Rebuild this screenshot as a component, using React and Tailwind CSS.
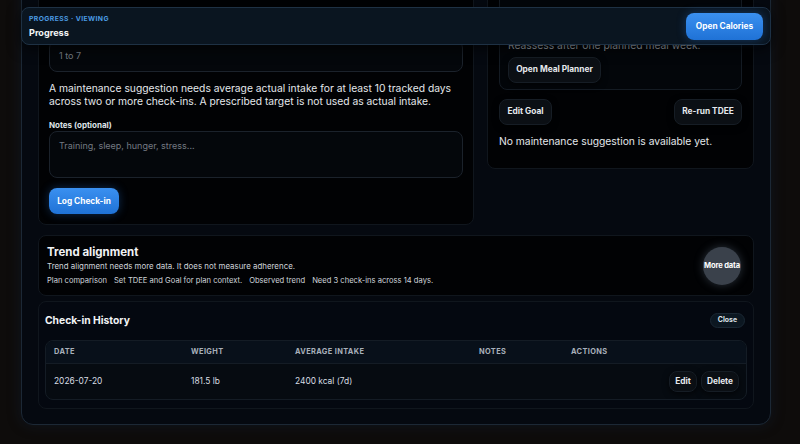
import React from 'react';

const card = 'border border-[#10161d] bg-[#010204] rounded-lg';
const ghostBtn =
  'flex items-center justify-center whitespace-nowrap rounded-lg border border-[#161d25] bg-[#0b0f14] text-[8.3px] font-bold text-[#e6e9ed] shadow-[0_2px_6px_rgba(0,0,0,0.6)]';
const blueBtn =
  'flex items-center justify-center whitespace-nowrap rounded-lg bg-gradient-to-b from-[#3a90f0] to-[#1f72d6] font-bold text-white shadow-[0_0_10px_rgba(40,120,220,0.35)]';

const App = () => {
  return (
    <div className="relative h-[444px] w-[800px] overflow-hidden bg-[#0e0c0b] font-['Inter',sans-serif]">
      {/* Main panel (scrolled, top hidden under the sticky header) */}
      <div className="ml-[21px] mt-[-40px] w-[750px] rounded-xl border border-[#1c2835] bg-[#050910] px-4 pb-[15px] pt-[12px] shadow-[0_0_14px_rgba(20,40,70,0.35)]">
        <div className="grid grid-cols-[436px_1fr] items-start gap-[13px]">
          {/* Left card */}
          <div className={`${card} px-[10px] pb-[10px] pt-[10px]`}>
            <div className="h-[55.5px]"></div>
            <div className="flex h-[32px] items-center rounded-lg border border-[#1b222b] bg-[#04070b] px-[9px] text-[9px] text-[#7a8088]">
              1 to 7
            </div>
            <p className="mt-[10px] text-[10.3px] leading-[13.5px] text-[#e4e7eb]">
              A maintenance suggestion needs average actual intake for at least 10 tracked days across two or more
              check-ins. A prescribed target is not used as actual intake.
            </p>
            <div className="mt-[11px] text-[8px] font-bold leading-[11px] text-[#dfe3e8]">Notes (optional)</div>
            <div className="h-[47px] rounded-lg border border-[#1b222b] bg-[#04070b] px-[9px] pt-[7px] text-[9px] text-[#737982]">
              Training, sleep, hunger, stress...
            </div>
            <button className={`${blueBtn} mt-[10.5px] h-[26px] w-[70px] text-[8.3px]`}>Log Check-in</button>
          </div>

          {/* Right card */}
          <div className={`${card} px-[11px] pb-[20px] pt-[10px]`}>
            <div className="rounded-lg border border-[#141b23] bg-[#03060a] px-[8px] pb-[6px] pt-[8px]">
              <div className="h-[46px]"></div>
              <div className="text-[10.3px] leading-[13px] text-[#9aa0a8]">Reassess after one planned meal week.</div>
              <button className={`${ghostBtn} mt-[4.5px] h-[26px] w-[93px]`}>Open Meal Planner</button>
            </div>
            <div className="mt-[9px] flex justify-between">
              <button className={`${ghostBtn} h-[26px] w-[53px]`}>Edit Goal</button>
              <button className={`${ghostBtn} h-[26px] w-[68px]`}>Re-run TDEE</button>
            </div>
            <p className="mt-[10px] text-[10.3px] leading-[13.5px] text-[#e4e7eb]">
              No maintenance suggestion is available yet.
            </p>
          </div>
        </div>

        {/* Trend alignment */}
        <div className={`${card} mt-[10px] flex h-[61px] items-center justify-between pl-[8px] pr-[12px]`}>
          <div>
            <div className="text-[11.5px] font-bold leading-[14px] text-[#f1f3f5]">Trend alignment</div>
            <div className="mt-[1px] text-[7.9px] leading-[12px] text-[#cfd4da]">
              Trend alignment needs more data. It does not measure adherence.
            </div>
            <div className="mt-[3px] flex gap-[7px] text-[7.6px] leading-[12px] text-[#cfd4da]">
              <span>Plan comparison</span>
              <span>Set TDEE and Goal for plan context.</span>
              <span>Observed trend</span>
              <span>Need 3 check-ins across 14 days.</span>
            </div>
          </div>
          <div className="flex h-[38px] w-[38px] items-center justify-center whitespace-nowrap rounded-full bg-[#3a414b] text-[7.6px] font-bold tracking-[-0.02em] text-white shadow-[0_0_10px_rgba(120,140,160,0.35)]">
            More data
          </div>
        </div>

        {/* Check-in History */}
        <div className="mt-[5px] rounded-lg border border-[#10161d] bg-[#040810] px-[6px] pb-[8px] pt-[10px]">
          <div className="flex items-center justify-between pr-[2px]">
            <div className="text-[10.3px] font-bold leading-[16px] text-[#f1f3f5]">Check-in History</div>
            <button className="flex h-[15px] items-center rounded-full border border-[#1a2733] bg-[#0c1721] px-[7px] text-[6.9px] font-bold text-[#dfe4ea]">
              Close
            </button>
          </div>
          <div className="mt-[12px] overflow-hidden rounded-lg border border-[#141c25] bg-[#060b11]">
            <div className="grid h-[23px] grid-cols-[137px_104px_184px_92px_1fr] items-center border-b border-[#141c25] bg-[#08101a] px-[8px] text-[7.4px] font-bold tracking-[0.05em] text-[#a8b0ba]">
              <span>DATE</span>
              <span>WEIGHT</span>
              <span>AVERAGE INTAKE</span>
              <span>NOTES</span>
              <span>ACTIONS</span>
            </div>
            <div className="grid h-[35px] grid-cols-[137px_104px_184px_92px_1fr] items-center pl-[8px] pr-[7px] text-[8.4px] text-[#d8dde3]">
              <span>2026-07-20</span>
              <span>181.5 lb</span>
              <span>2400 kcal (7d)</span>
              <span></span>
              <div className="flex justify-end gap-[4px]">
                <button className={`${ghostBtn} h-[21px] w-[28px]`}>Edit</button>
                <button className={`${ghostBtn} h-[21px] w-[38px]`}>Delete</button>
              </div>
            </div>
          </div>
        </div>
      </div>

      {/* Sticky header overlay */}
      <div className="absolute left-[21px] top-[7px] flex h-[38px] w-[750px] items-center justify-between rounded-lg border border-[#1e3144] bg-[#0a1520] pl-[7px] pr-[7px] shadow-[0_4px_14px_rgba(0,0,0,0.6)]">
        <div>
          <div className="text-[6.8px] font-bold leading-[10px] tracking-[0.06em] text-[#4b9be2]">PROGRESS · VIEWING</div>
          <div className="mt-[3px] text-[9.1px] font-bold leading-[12px] text-[#f3f5f7]">Progress</div>
        </div>
        <button className={`${blueBtn} h-[27px] w-[77px] text-[8.3px]`}>Open Calories</button>
      </div>
    </div>
  );
};

export default App;
